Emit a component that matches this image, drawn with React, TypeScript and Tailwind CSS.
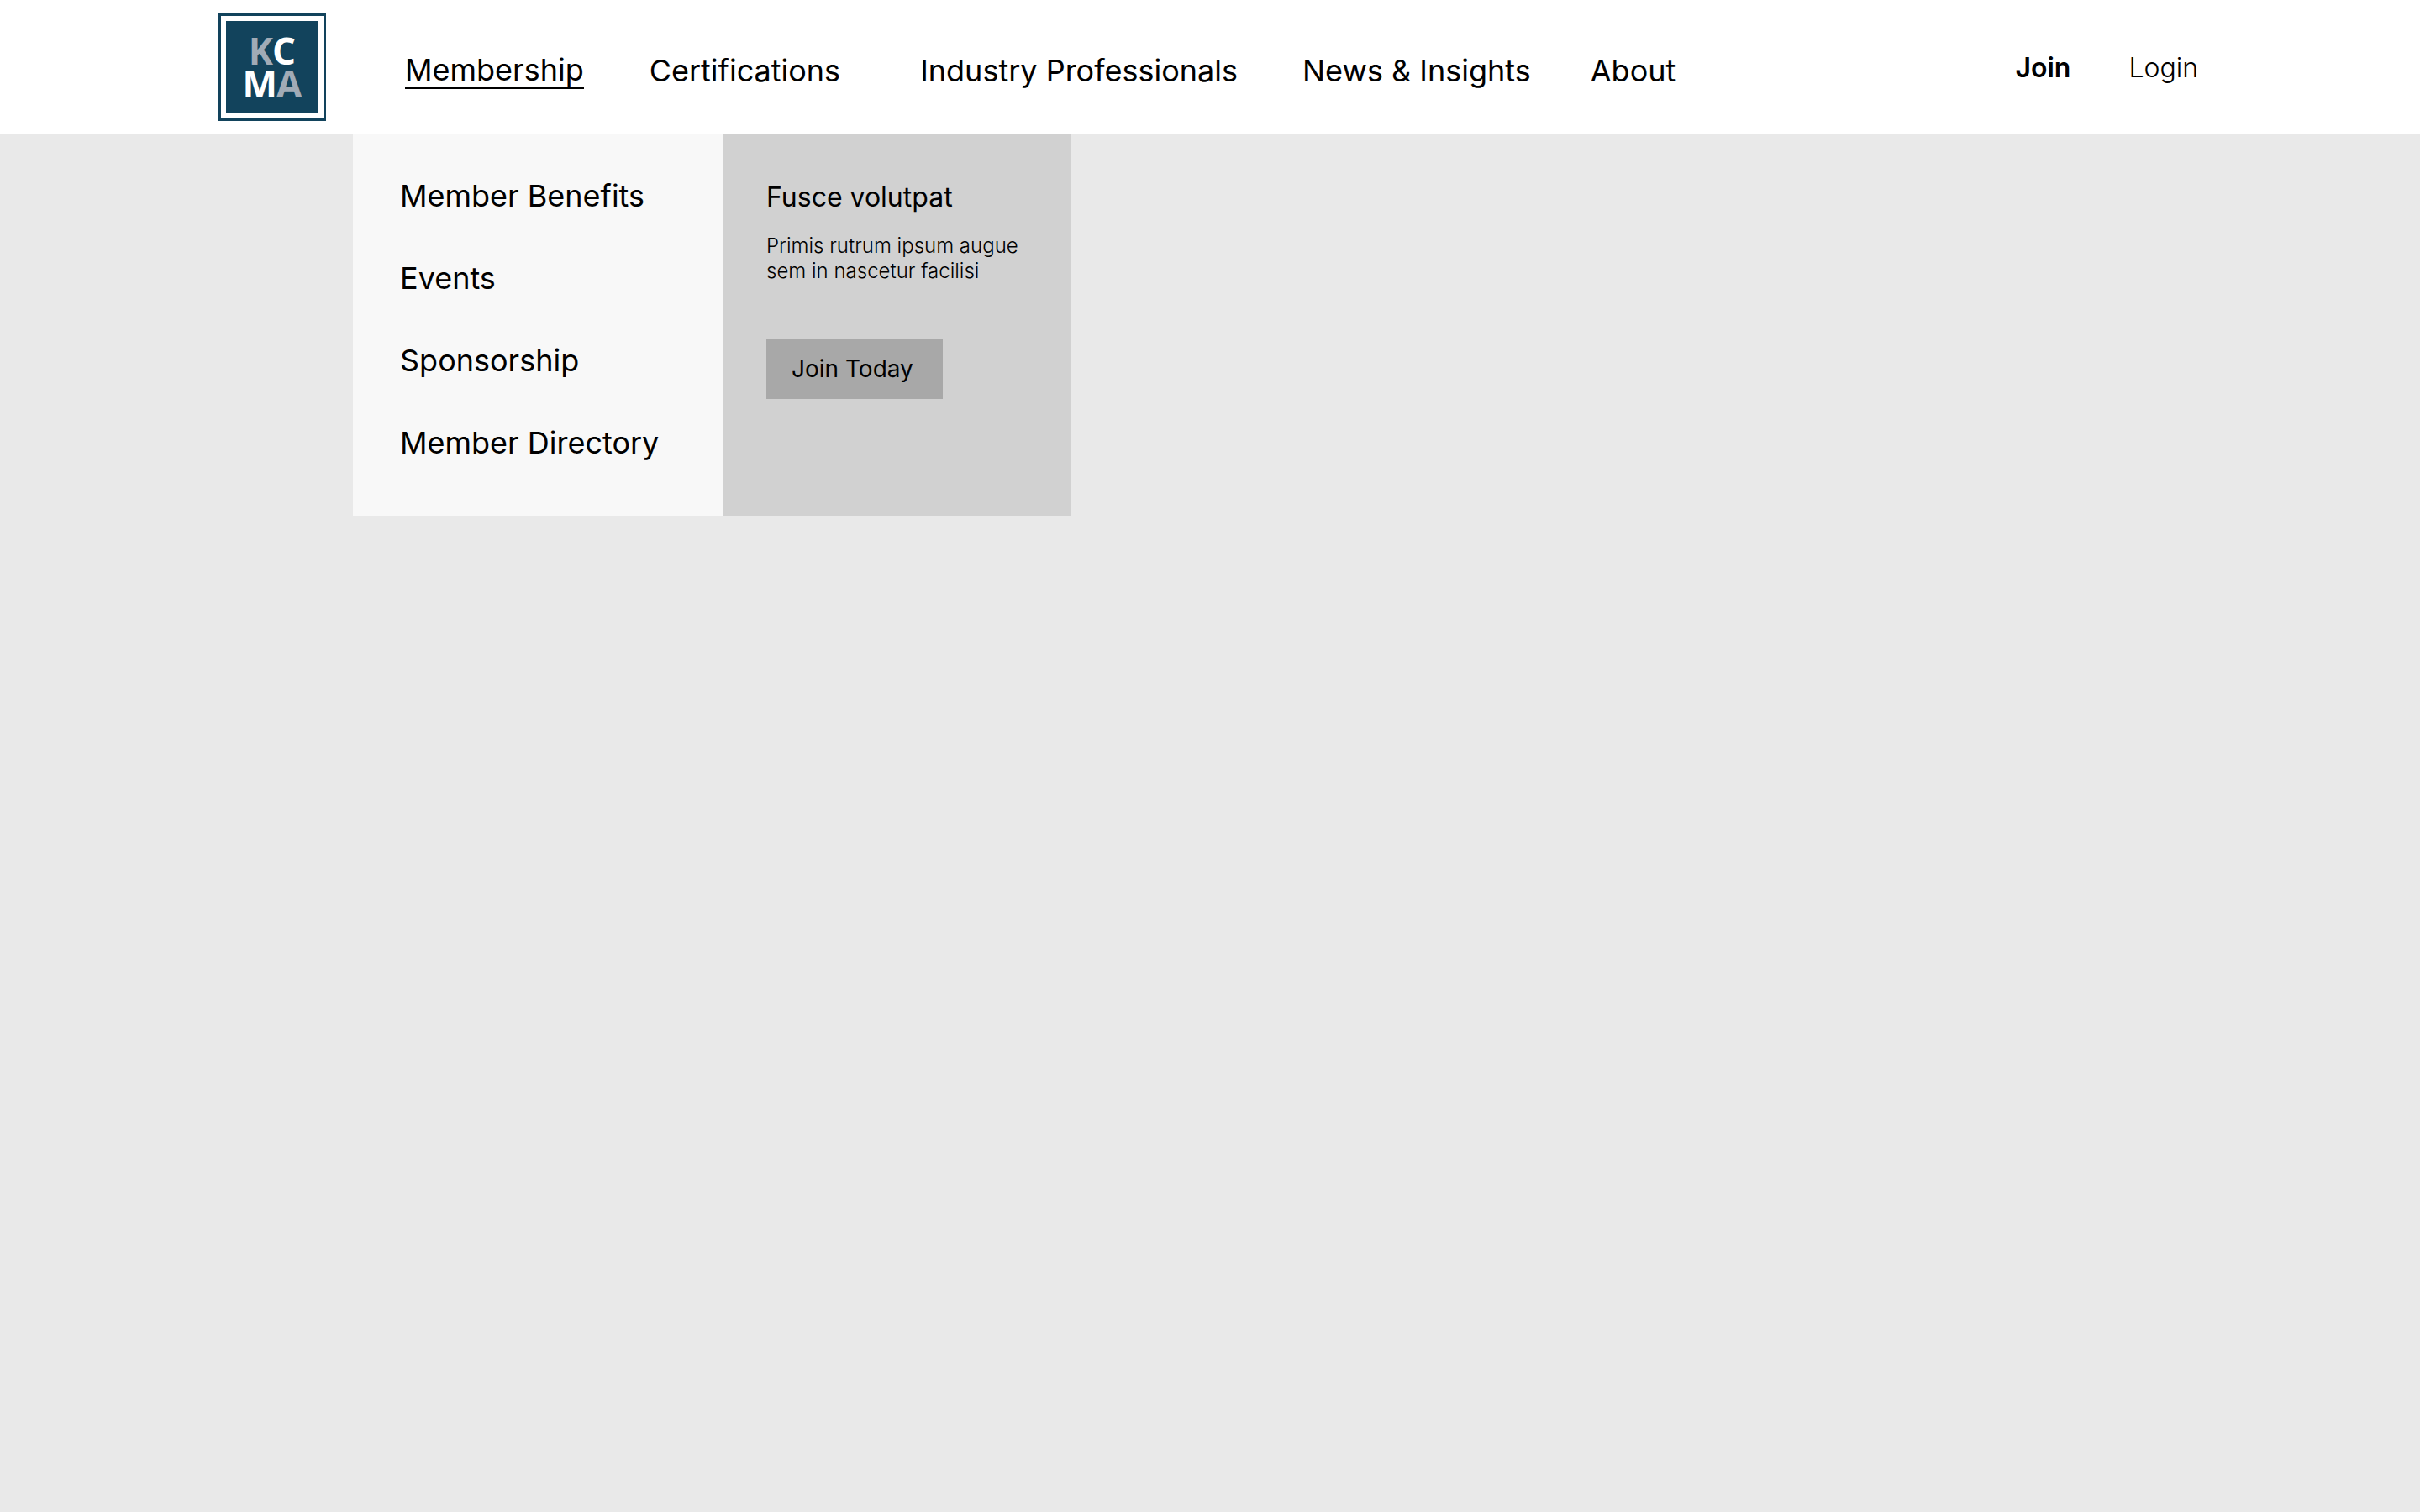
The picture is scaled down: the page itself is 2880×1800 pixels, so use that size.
const navItems = [
  { label: "Membership", className: "ml-[94px] border-b-[3px] border-black leading-[40px]" },
  { label: "Certifications", className: "ml-[78px] leading-[43px]" },
  { label: "Industry Professionals", className: "ml-[95px] leading-[43px]" },
  { label: "News & Insights", className: "ml-[77px] leading-[43px]" },
  { label: "About", className: "ml-[71px] leading-[43px]" },
];

const menuItems = ["Member Benefits", "Events", "Sponsorship", "Member Directory"];

const Logo = () => {
  return (
    <div className="h-32 w-32 shrink-0 border-[3px] border-[#12435c] bg-white p-[6px]">
      <div className="flex h-full w-full flex-col items-center justify-center bg-[#12435c] font-['Open_Sans',sans-serif] text-[44px] leading-[39px] font-bold">
        <div className="flex">
          <span className="text-[#a1abb6]">K</span>
          <span className="-ml-px text-white">C</span>
        </div>
        <div className="flex">
          <span className="text-white">M</span>
          <span className="-ml-px text-[#a1abb6]">A</span>
        </div>
      </div>
    </div>
  );
};

export default function App() {
  return (
    <div className="relative min-h-[1800px] bg-[#e9e9e9] font-['Inter',sans-serif] text-black [font-optical-sizing:none]">
      <header className="flex h-40 items-center bg-white pl-[260px]">
        <Logo />
        <nav className="mt-[9px] flex items-center text-[36px]">
          {navItems.map((item) => (
            <a key={item.label} className={item.className}>
              {item.label}
            </a>
          ))}
        </nav>
        <div className="mt-[1px] ml-auto flex items-center pr-[264px] text-[32px] leading-[40px]">
          <a className="font-semibold">Join</a>
          <a className="ml-[69px] font-light">Login</a>
        </div>
      </header>

      <div className="absolute top-40 left-[420px] flex h-[454px]">
        <ul className="flex w-[440px] flex-col gap-[54px] bg-[#f8f8f8] pt-[51px] pl-[56px] text-[36px] leading-[44px]">
          {menuItems.map((item) => (
            <li key={item}>{item}</li>
          ))}
        </ul>
        <div className="w-[414px] bg-[#d1d1d1] pt-[55px] pl-[52px]">
          <h2 className="text-[32px] leading-[40px]">Fusce volutpat</h2>
          <p className="mt-[23px] text-[24px] leading-[30px] font-light">
            Primis rutrum ipsum augue
            <br />
            sem in nascetur facilisi
          </p>
          <button className="mt-[65px] flex h-[72px] w-[210px] items-center bg-[#a8a8a8] pl-[30px] text-[28px]">
            Join Today
          </button>
        </div>
      </div>
    </div>
  );
}
